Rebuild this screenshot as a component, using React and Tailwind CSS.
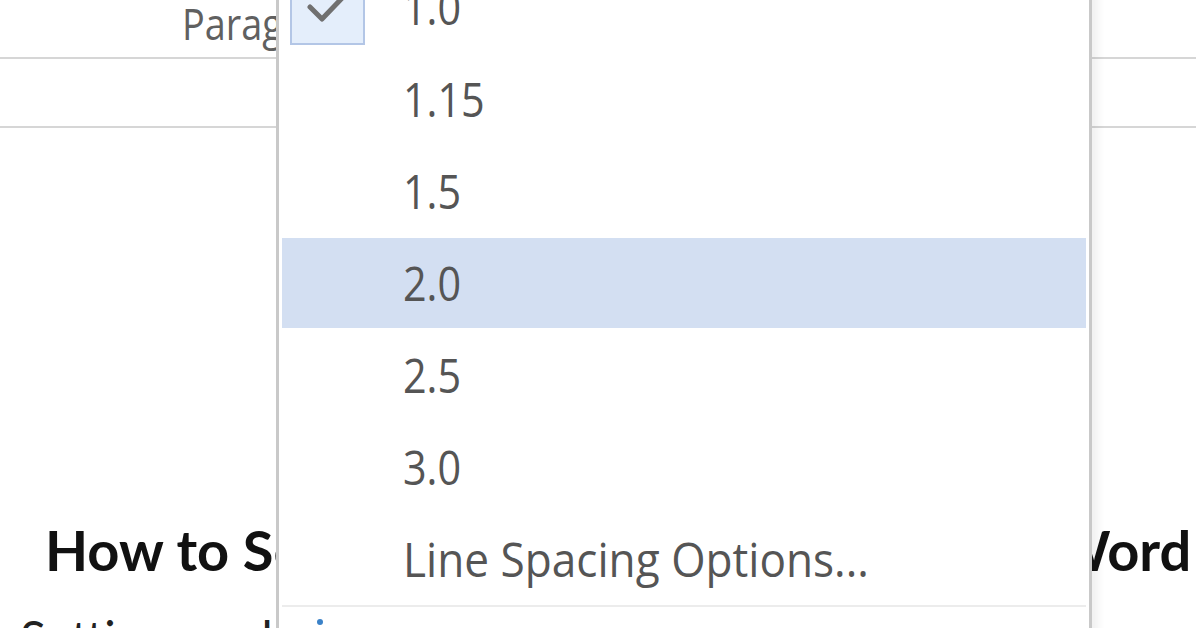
import React from 'react';

const ITEMS = ['1.0', '1.15', '1.5', '2.0', '2.5', '3.0', 'Line Spacing Options...'];

const menuFont = { fontFamily: '"Open Sans", "Noto Sans", sans-serif' };

const CheckBox = () => (
  <div className="w-[75px] h-[75px] flex items-center justify-center bg-[#e4eefb] border-2 border-[#b3c6e6]">
    <svg width="44" height="34" viewBox="0 0 44 34" fill="none">
      <path d="M4 17 L16 29 L40 4" stroke="#707070" strokeWidth="5" strokeLinecap="round" strokeLinejoin="round" />
    </svg>
  </div>
);

const MenuRow = ({ label, checked, active, wide }) => (
  <div className="h-[92px] py-[1px] px-[3px]">
    <div className={`h-full flex items-center ${active ? 'bg-[#d3dff2]' : ''}`}>
      <div className="w-[121px] pl-[8px] flex items-center">
        {checked && <CheckBox />}
      </div>
      <span
        className={`text-[48px] text-[#555555] leading-none origin-left whitespace-nowrap ${wide ? 'scale-x-[0.92]' : 'scale-x-[0.86]'}`}
        style={menuFont}
      >
        {label}
      </span>
    </div>
  </div>
);

export default function App() {
  return (
    <div className="relative w-[1196px] h-[628px] overflow-hidden bg-white" style={{ fontFamily: '"Open Sans", sans-serif' }}>
      {/* document behind the menu */}
      <div className="flex flex-col">
        <div className="h-[57px] pl-[182px] flex items-center">
          <span className="text-[44px] text-[#606060] leading-none -mt-[12px] origin-left scale-x-[0.86]">Paragraph</span>
        </div>
        <div className="h-[2px] bg-[#d6d6d6]" />
        <div className="h-[67px]" />
        <div className="h-[2px] bg-[#d6d6d6]" />
        <div className="h-[394px]" />
        <div
          className="pl-[45px] text-[56px] font-bold text-[#111111] leading-none whitespace-nowrap"
          style={{ fontFamily: 'Lato, "Open Sans", sans-serif' }}
        >
          How to S<span className="[word-spacing:15px]">et Line Spacing in Microsoft Word</span>
        </div>
        <div
          className="pl-[20px] mt-[36px] text-[48px] text-[#222222] leading-none whitespace-nowrap"
          style={{ fontFamily: 'Lato, sans-serif' }}
        >
          Setting up double spacing in a document is quite easy
        </div>
      </div>

      {/* dropdown menu */}
      <div className="absolute left-[276px] top-[-39px] w-[816px] h-[720px] bg-white border-x-[3px] border-[#c9c9c9] shadow-[6px_0_8px_rgba(0,0,0,0.06)]">
        {ITEMS.map((label, i) => (
          <MenuRow key={label} label={label} checked={i === 0} active={i === 3} wide={i === 6} />
        ))}
        <div className="mx-[3px] h-[2px] bg-[#ececec]" />
        <div className="h-[40px] flex items-start pl-[38px] pt-[12px]">
          <div className="w-[6px] h-[6px] rounded-full bg-[#3b82c8]" />
        </div>
      </div>
    </div>
  );
}
